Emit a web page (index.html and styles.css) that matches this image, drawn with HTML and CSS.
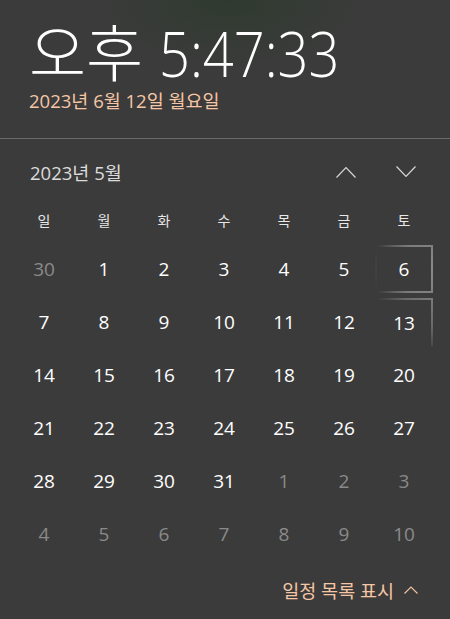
FILE: index.html
```html
<!DOCTYPE html>
<html lang="ko">
  <head>
    <meta charset="UTF-8">
    <title>달력</title>
    <link rel="stylesheet" href="styles.css">
  </head>
  <body>
    <div id="flyout">
      <div class="clock">
        <div class="time">오후 <span class="hms">5:47:33</span></div>
        <div class="today">2023년 6월 12일 월요일</div>
      </div>

      <div class="cal">
        <div class="cal-head">
          <span class="month">2023년 5월</span>
          <span class="nav">
            <svg width="20" height="12" viewBox="0 0 20 12"><path d="M0.5 11.5 L10 1.5 L19.5 11.5" fill="none" stroke="#d8d8d8" stroke-width="1.2"/></svg>
            <svg width="20" height="12" viewBox="0 0 20 12"><path d="M0.5 0.5 L10 10.5 L19.5 0.5" fill="none" stroke="#d8d8d8" stroke-width="1.2"/></svg>
          </span>
        </div>

        <ul class="week">
          <li>일</li><li>월</li><li>화</li><li>수</li><li>목</li><li>금</li><li>토</li>
        </ul>

        <ul class="days">
          <li class="other">30</li><li>1</li><li>2</li><li>3</li><li>4</li><li>5</li><li class="reveal">6</li>
          <li>7</li><li>8</li><li>9</li><li>10</li><li>11</li><li>12</li><li class="reveal-top">13</li>
          <li>14</li><li>15</li><li>16</li><li>17</li><li>18</li><li>19</li><li>20</li>
          <li>21</li><li>22</li><li>23</li><li>24</li><li>25</li><li>26</li><li>27</li>
          <li>28</li><li>29</li><li>30</li><li>31</li><li class="other">1</li><li class="other">2</li><li class="other">3</li>
          <li class="other">4</li><li class="other">5</li><li class="other">6</li><li class="other">7</li><li class="other">8</li><li class="other">9</li><li class="other">10</li>
        </ul>
      </div>

      <div class="agenda">
        <span>일정 목록 표시</span>
        <svg width="14" height="8" viewBox="0 0 14 8"><path d="M0.5 7.5 L7 1 L13.5 7.5" fill="none" stroke="#f5c6a5" stroke-width="1.1"/></svg>
      </div>
    </div>
  </body>
</html>
```

FILE: styles.css
```css
body, div, ul, li { margin: 0; padding: 0; }
ul { list-style-type: none; }
body { background: #3b3b3b; font-family: "Open Sans", "Noto Sans CJK KR", sans-serif; color: #fff; }

#flyout { width: 450px; height: 619px; overflow: hidden; display: flex; flex-direction: column;
  background: radial-gradient(ellipse 140px 70px at 230px 0, #2f3a2f, rgba(59,59,59,0) 100%), #3b3b3b; }

.clock { height: 139px; box-sizing: border-box; padding: 18px 0 0 29px; border-bottom: 1px solid #6b6b6b; }
.clock .time { font-size: 62px; font-weight: 300; line-height: 70px; color: #fff; }
.clock .time .hms { display: inline-block; font-size: 63px; transform: scaleX(0.86); transform-origin: 0 50%; }
.clock .today { font-size: 18.5px; line-height: 26px; color: #f5c6a5; }

.cal { padding: 0 15px; }
.cal-head { display: flex; justify-content: space-between; align-items: center; height: 66px; padding: 0 15px; }
.cal-head .month { font-size: 18.5px; color: #dcdcdc; }
.cal-head .nav { display: flex; gap: 40px; padding-right: 4px; }

.week { display: grid; grid-template-columns: repeat(7, 58px); column-gap: 2px; height: 30px; align-items: center; }
.week li { text-align: center; font-size: 14px; color: #e8e8e8; }

.days { display: grid; grid-template-columns: repeat(7, 58px); grid-auto-rows: 48px; gap: 5px 2px; margin-top: 10px; }
.days li { display: flex; align-items: center; justify-content: center; font-size: 19px; color: #fff; box-sizing: border-box; }
.days li.other { color: #8a8a8a; }
.days li.reveal { border: 2px solid transparent;
  border-image: radial-gradient(ellipse 60px 70px at 100% 50%, #8a8a8a 0%, #7a7a7a 55%, rgba(110,110,110,0) 100%) 1; }
.days li.reveal-top { border: 2px solid transparent; border-bottom: 0;
  border-image: radial-gradient(circle at 100% 0, #7a7a7a 0%, #6a6a6a 35%, rgba(100,100,100,0) 75%) 1; }

.agenda { margin-top: auto; display: flex; justify-content: flex-end; align-items: center; gap: 10px; height: 46px; padding: 0 32px 6px 0; }
.agenda span { font-size: 18.5px; color: #f5c6a5; }
```
